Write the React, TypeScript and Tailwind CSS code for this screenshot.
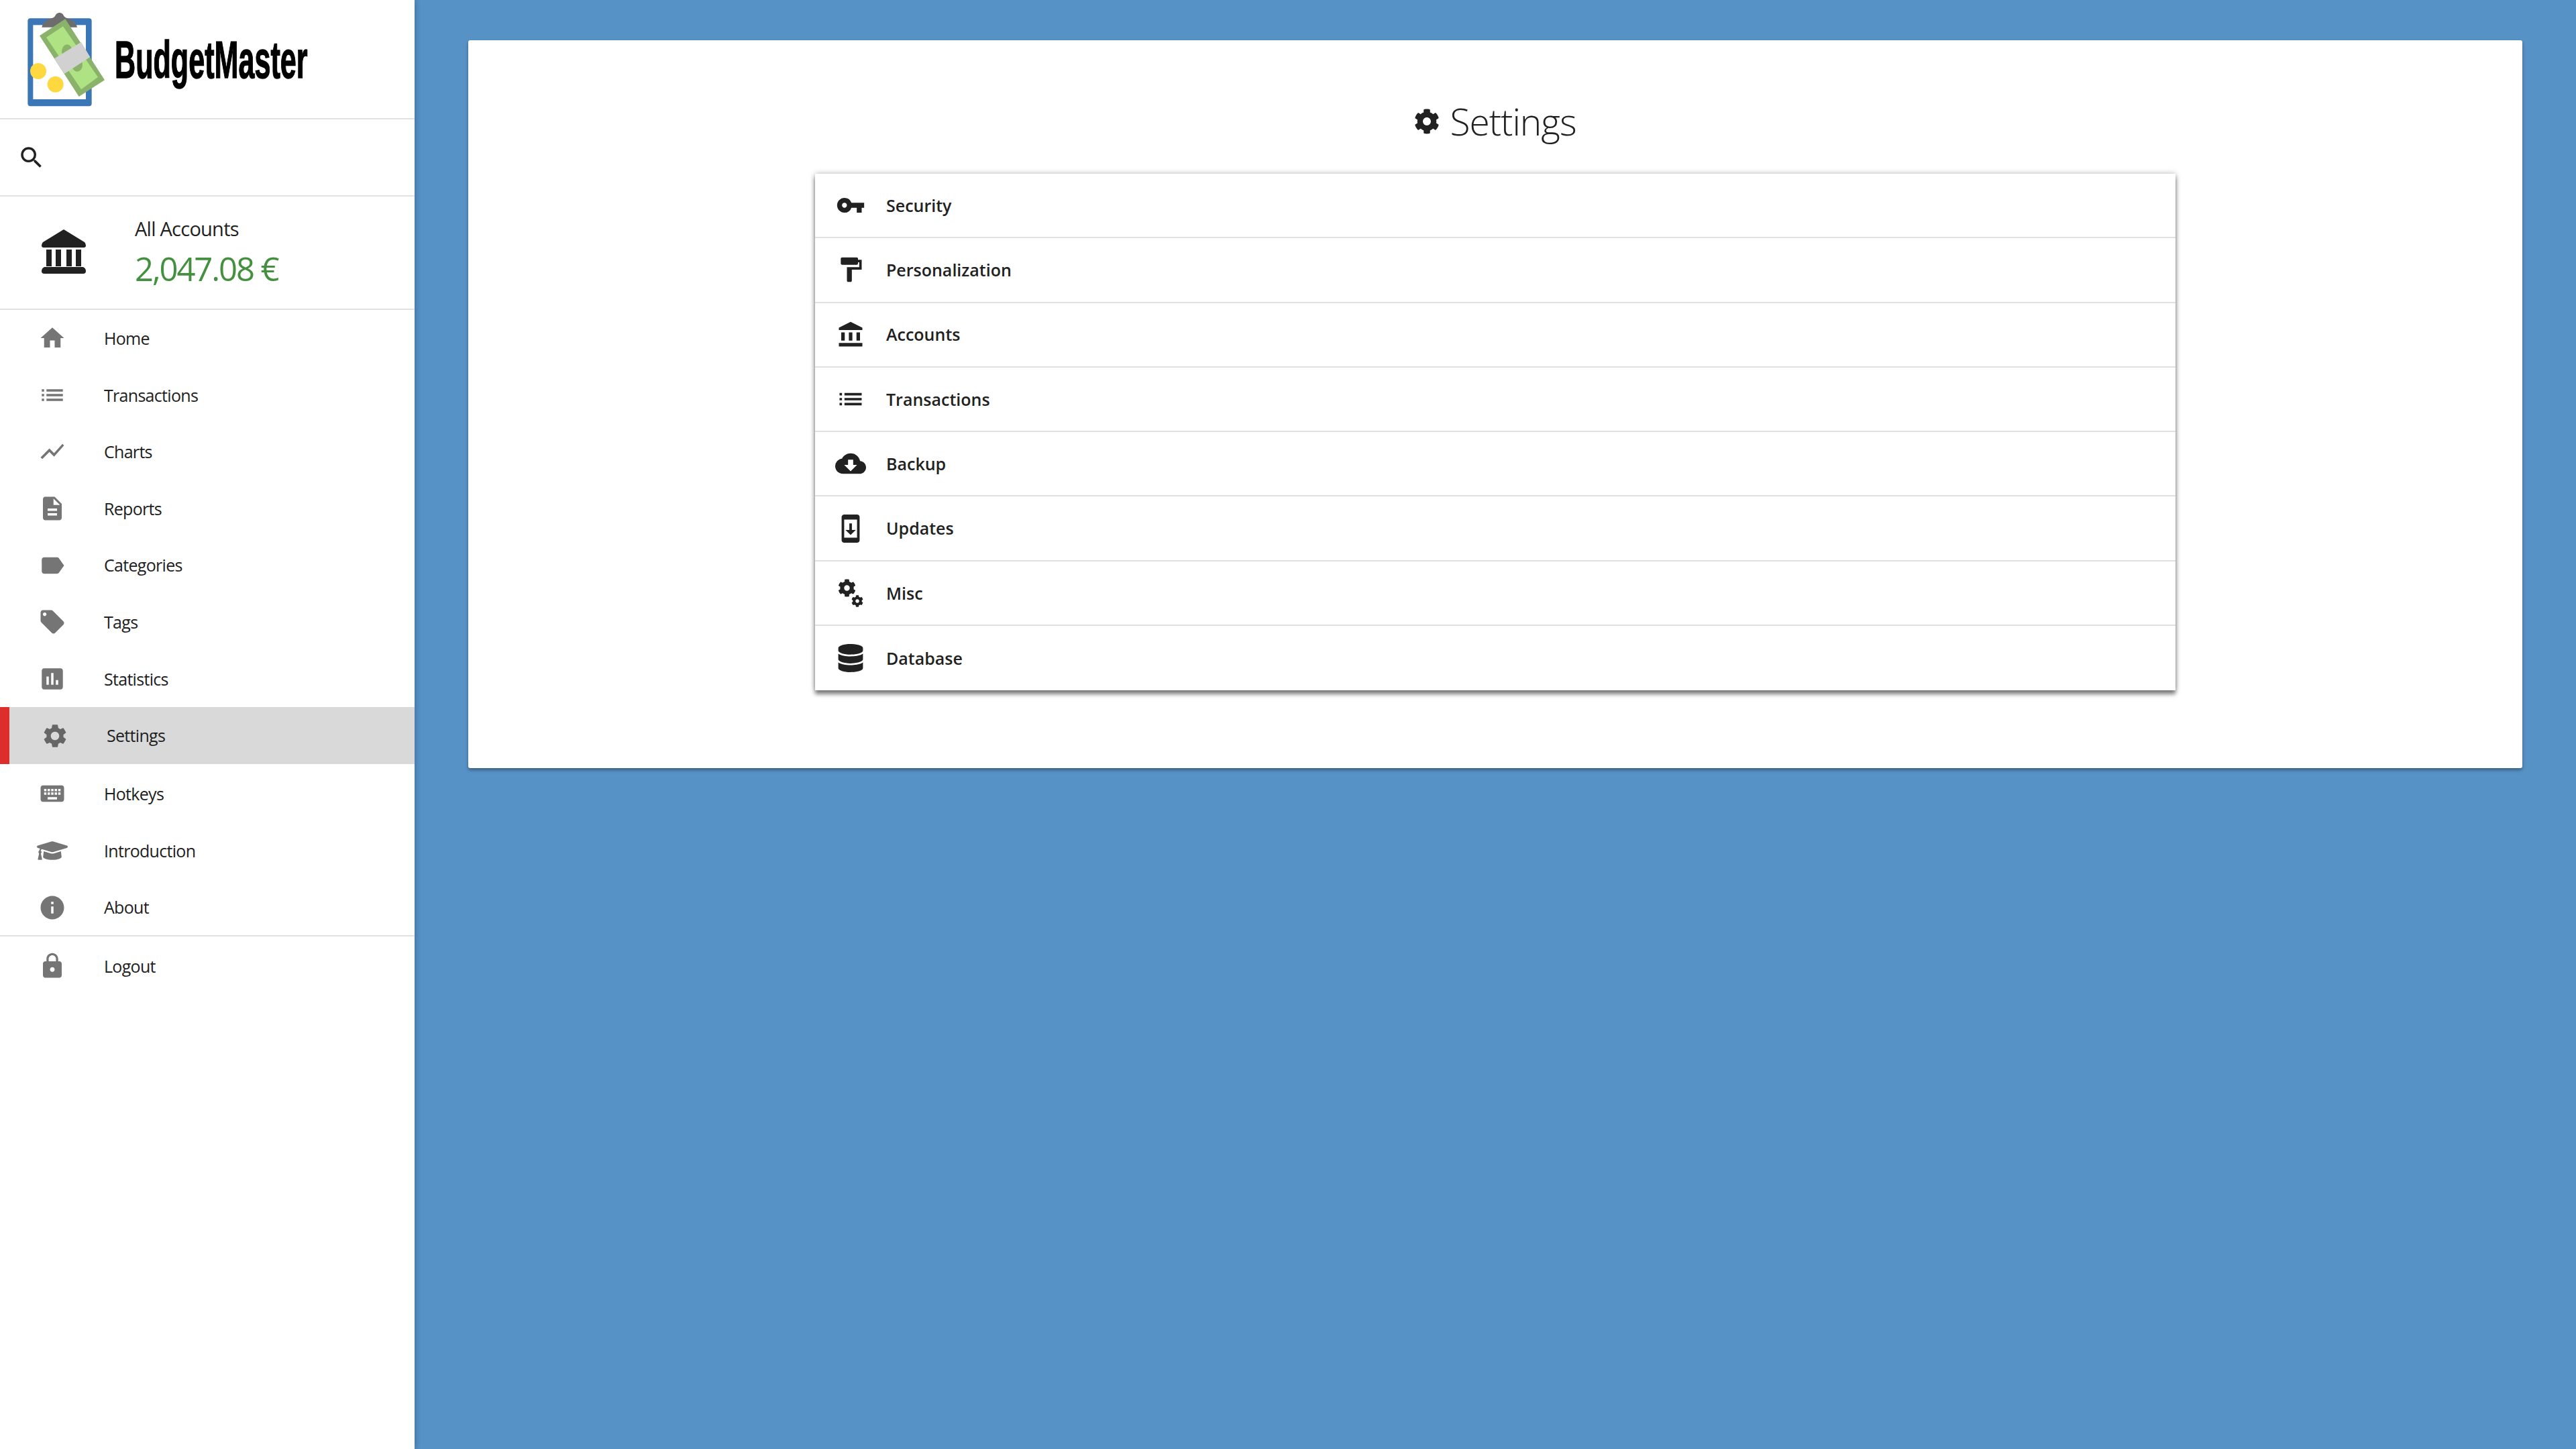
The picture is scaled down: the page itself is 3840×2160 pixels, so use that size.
import React from "react";
import {
  MdHome, MdList, MdShowChart, MdDescription, MdLabel, MdLocalOffer, MdAssessment, MdSettings,
  MdKeyboard, MdInfo, MdLock, MdSearch, MdVpnKey, MdFormatPaint, MdCloudDownload, MdSystemUpdate, MdAccountBalance,
} from "react-icons/md";
import { FaGraduationCap, FaDatabase, FaCog } from "react-icons/fa";

const font = "font-['Open_Sans',sans-serif]";

function Bank({ className }: { className: string }) {
  return (
    <svg viewBox="0 0 66 66" className={className} fill="currentColor">
      <path d="M33 0 L64 19 Q66 21 66 24 Q66 27 63 27 L3 27 Q0 27 0 24 Q0 21 2 19 Z" />
      <rect x="7" y="30" width="8" height="25" />
      <rect x="21" y="30" width="8" height="25" />
      <rect x="37" y="30" width="8" height="25" />
      <rect x="51" y="30" width="8" height="25" />
      <path d="M4 56 L62 56 Q66 58 66 62 Q66 66 62 66 L4 66 Q0 66 0 62 Q0 58 4 56 Z" />
    </svg>
  );
}

function Logo() {
  return (
    <svg viewBox="0 0 480 525" className="w-[160px] h-[175px] shrink-0">
      <rect x="64" y="82" width="286" height="393" rx="12" fill="#3b77b7" />
      <rect x="88" y="112" width="236" height="332" fill="#ffffff" />
      <path d="M127 122 Q128 96 170 82 Q186 76 188 68 Q194 57 206 57 Q218 57 224 68 Q226 76 242 82 Q284 96 285 122 Z" fill="#6d6d6d" />
      <polygon points="117,160 232,85 408,358 293,432" fill="#8ab26a" />
      <polygon points="147,167 222,118 378,345 303,400" fill="#aee283" />
      <ellipse cx="240" cy="232" rx="24" ry="33" fill="#8ab26a" />
      <ellipse cx="285" cy="290" rx="24" ry="30" fill="#8ab26a" />
      <polygon points="183,262 303,188 343,255 228,330" fill="#d1d1d1" />
      <circle cx="111" cy="318" r="36" fill="#fdd83f" />
      <circle cx="188" cy="377" r="36" fill="#fdd83f" />
    </svg>
  );
}

function GradCap() {
  return <FaGraduationCap className="w-[46px] h-[46px] shrink-0" />;
}

const nav = [
  { label: "Home", Icon: MdHome },
  { label: "Transactions", Icon: MdList },
  { label: "Charts", Icon: MdShowChart },
  { label: "Reports", Icon: MdDescription },
  { label: "Categories", Icon: MdLabel },
  { label: "Tags", Icon: MdLocalOffer },
  { label: "Statistics", Icon: MdAssessment },
];
const nav2 = [
  { label: "Hotkeys", Icon: MdKeyboard },
  { label: "Introduction", Icon: GradCap },
  { label: "About", Icon: MdInfo },
];

function NavRow({ label, Icon }: { label: string; Icon: React.ComponentType<{ className?: string }> }) {
  return (
    <div className="flex items-center h-[84.6px] pl-[57px] shrink-0">
      <div className="w-[42px] h-[42px] flex items-center justify-center text-[#757575]">
        <Icon className="w-[42px] h-[42px]" />
      </div>
      <span className="ml-[56px] mt-[1px] text-[25px] text-[#212121] tracking-[-0.7px]">{label}</span>
    </div>
  );
}

function Gears() {
  return (
    <div className="relative w-[38px] h-[42px]">
      <FaCog className="absolute left-0 top-0 w-[27px] h-[27px]" />
      <FaCog className="absolute right-0 bottom-0 w-[18px] h-[18px]" />
    </div>
  );
}

const items = [
  { label: "Security", icon: <MdVpnKey className="w-[44px] h-[44px]" /> },
  { label: "Personalization", icon: <MdFormatPaint className="w-[44px] h-[44px]" /> },
  { label: "Accounts", icon: <MdAccountBalance className="w-[42px] h-[42px]" /> },
  { label: "Transactions", icon: <MdList className="w-[44px] h-[44px]" /> },
  { label: "Backup", icon: <MdCloudDownload className="w-[46px] h-[46px]" /> },
  { label: "Updates", icon: <MdSystemUpdate className="w-[46px] h-[46px]" /> },
  { label: "Misc", icon: <Gears /> },
  { label: "Database", icon: <FaDatabase className="w-[40px] h-[42px]" /> },
];

export default function App() {
  return (
    <div className={`flex w-full h-screen bg-[#5792c7] ${font}`}>
      <aside className="relative w-[618px] h-full bg-white flex flex-col shrink-0 shadow-[2px_0_8px_rgba(0,0,0,0.22)]">
        <div className="h-[178px] flex items-start pl-[20px] border-b-2 border-[#e2e2e2] shrink-0 overflow-hidden">
          <Logo />
          <div className="ml-[-9px] mt-[47px] w-[286px]">
            <span className="inline-block origin-left scale-x-[0.553] font-['Liberation_Sans',sans-serif] font-bold text-[78px] leading-[84px] text-black whitespace-nowrap [-webkit-text-stroke:1.5px_black]">
              BudgetMaster
            </span>
          </div>
        </div>
        <div className="h-[115px] flex items-center pl-[26px] border-b-2 border-[#e2e2e2] shrink-0">
          <MdSearch className="w-[42px] h-[42px] text-[#212121]" />
        </div>
        <div className="h-[169px] flex items-center pl-[62px] border-b-2 border-[#e2e2e2] shrink-0">
          <Bank className="w-[66px] h-[66px] text-[#212121] mt-[-4px]" />
          <div className="ml-[73px] flex flex-col">
            <span className="text-[29px] leading-[40px] text-[#212121] font-normal tracking-[-0.75px]">All Accounts</span>
            <span className="text-[49px] leading-[66px] text-[#43903f] font-normal tracking-[-2.1px] mt-[6px]">2,047.08 €</span>
          </div>
        </div>
        {nav.map((n) => (
          <NavRow key={n.label} label={n.label} Icon={n.Icon} />
        ))}
        <div className="flex items-center h-[85px] border-l-[14px] border-[#dc2e2b] bg-[#d9d9d9] pl-[47px] shrink-0 mb-[2px]">
          <MdSettings className="w-[42px] h-[42px] text-[#666666]" />
          <span className="ml-[56px] mt-[1px] text-[25px] text-[#212121] tracking-[-0.7px]">Settings</span>
        </div>
        {nav2.map((n) => (
          <NavRow key={n.label} label={n.label} Icon={n.Icon} />
        ))}
        <div className="border-b-2 border-[#e2e2e2] mt-[-1px]" />
        <div className="mt-[2px]">
          <NavRow label="Logout" Icon={MdLock} />
        </div>
      </aside>
      <main className="flex-1 px-[80px] pt-[60px]">
        <div className="bg-white h-[1085px] rounded-[3px] shadow-[0_3px_5px_rgba(0,0,0,0.35)] flex flex-col items-center">
          <h1 className="mt-[86px] h-[70px] flex items-center text-[#212121] font-light text-[55px] tracking-[-1px]">
            <FaCog className="w-[38px] h-[38px] mr-[15px]" />
            Settings
          </h1>
          <div className="mt-[43px] w-[2028px] bg-white shadow-[0_6px_6px_rgba(0,0,0,0.45),0_0_8px_rgba(0,0,0,0.3)]">
            {items.map((it, i) => (
              <div
                key={it.label}
                className={`flex items-center h-[96.3px] ${i < items.length - 1 ? "border-b-2 border-[#e0e0e0]" : ""}`}
              >
                <div className="ml-[27px] w-[52px] flex items-center justify-center text-[#212121]">{it.icon}</div>
                <span className="ml-[27px] mt-[1px] text-[25px] font-semibold text-[#212121] tracking-[0px]">{it.label}</span>
              </div>
            ))}
          </div>
        </div>
      </main>
    </div>
  );
}
